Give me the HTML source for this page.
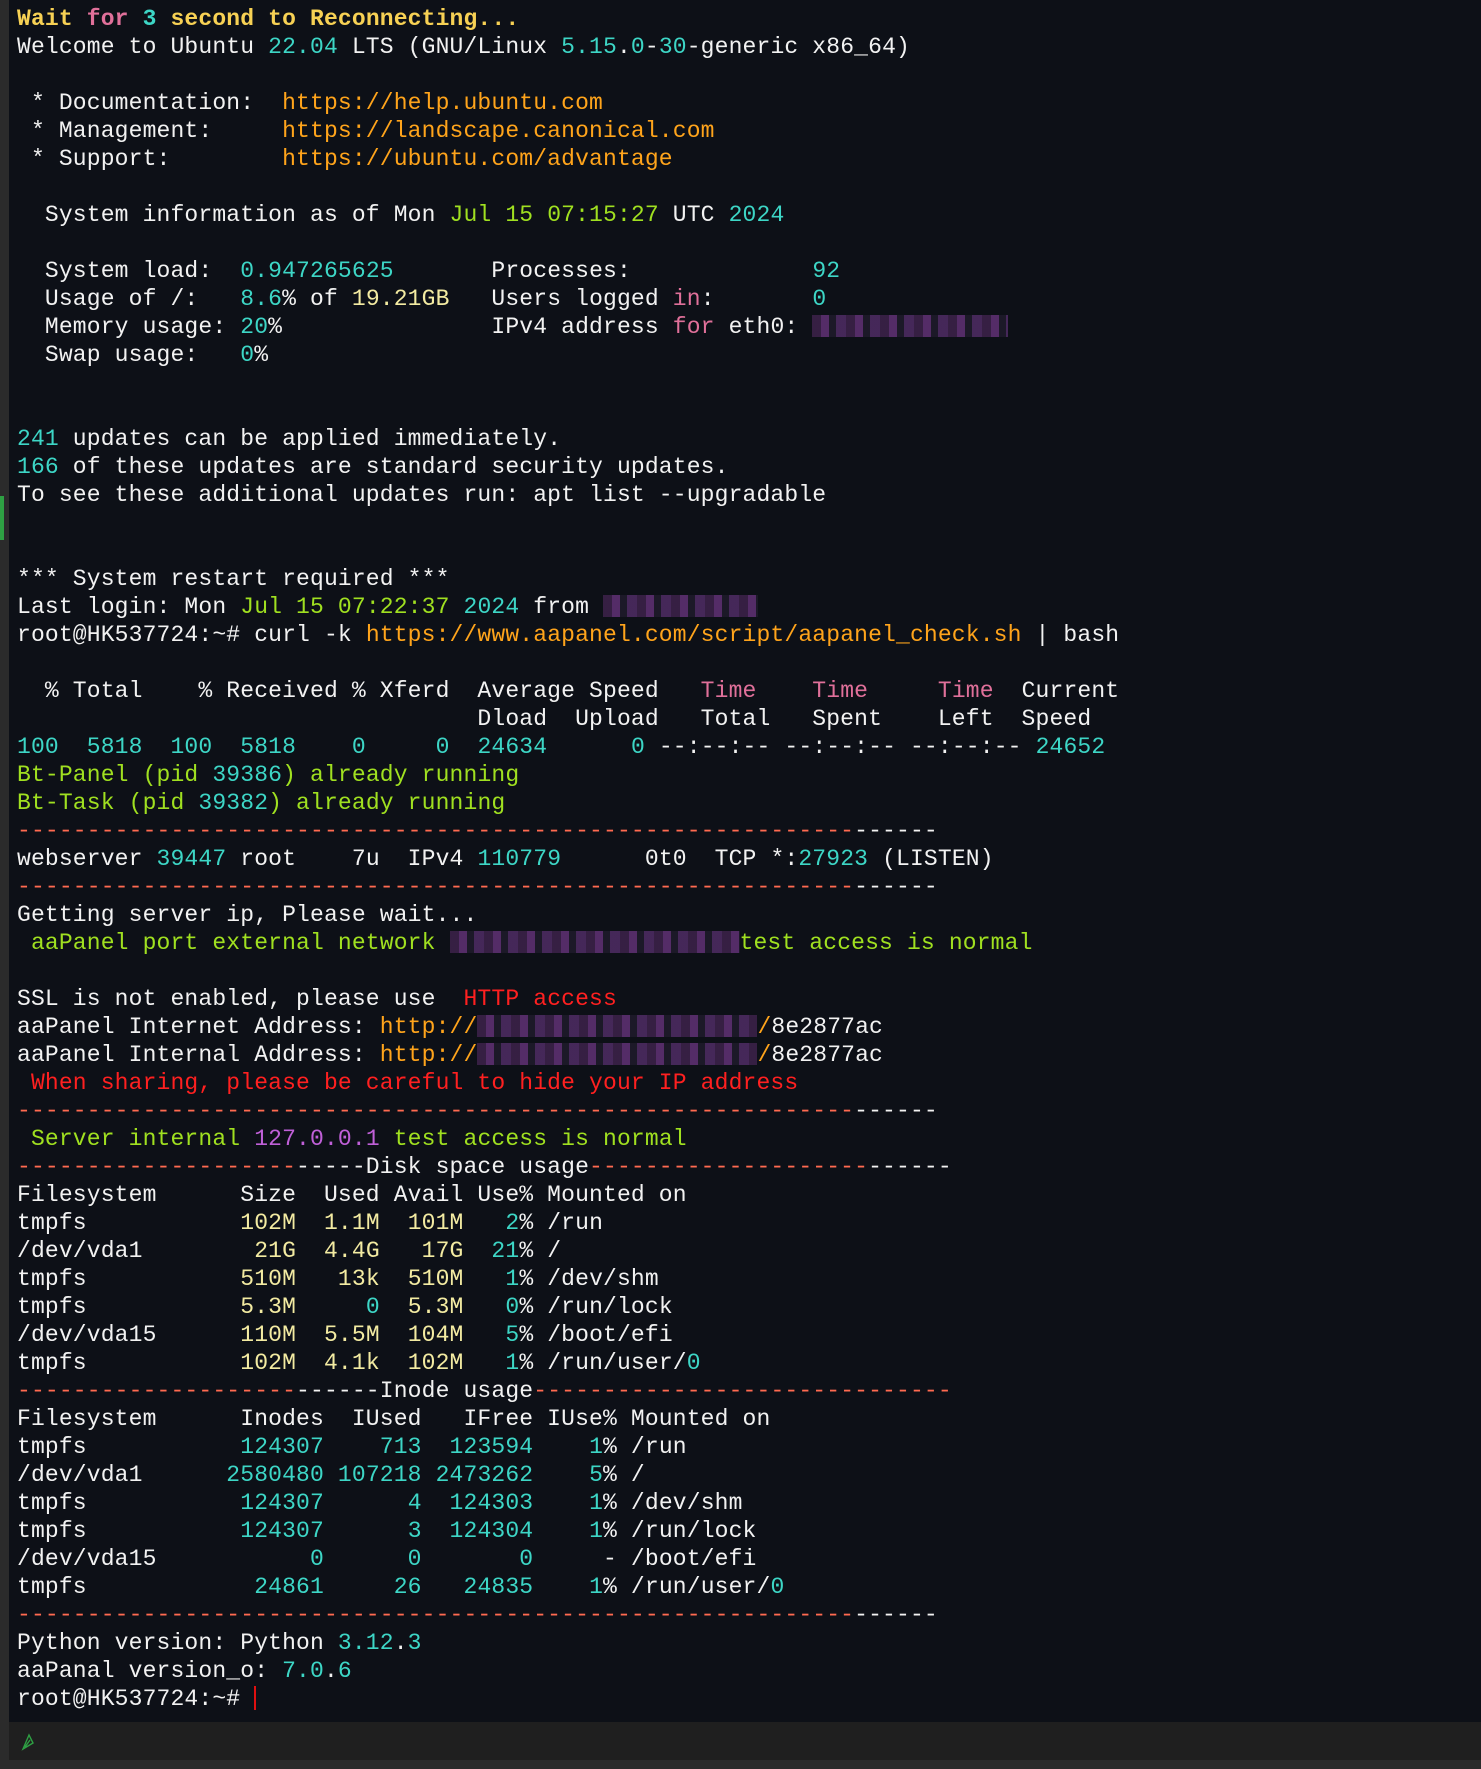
<!DOCTYPE html>
<html><head><meta charset="utf-8"><style>
html,body{margin:0;padding:0;}
body{width:1481px;height:1769px;background:#0d1017;position:relative;overflow:hidden;}
.lb{position:absolute;left:0;top:0;width:9px;height:1769px;background:#2b2b2b;}
.gm{position:absolute;left:0;top:496px;width:4px;height:44px;background:#2ea043;}
pre{position:absolute;left:17px;top:5px;margin:0;font-family:"Liberation Mono",monospace;font-size:23px;line-height:28px;color:#f2f2f2;letter-spacing:0.15px;}
.y{color:#f7d154;font-weight:bold}
.p{color:#e0709a}
.c{color:#3dd6c6}
.o{color:#ffa41b}
.g{color:#a0e020}
.r{color:#ff2020}
.v{color:#c060d8}
.ly{color:#f3eba2}
.d{color:#ff6a50}
.b{display:inline-block;height:22px;vertical-align:-4px;background:repeating-linear-gradient(90deg,#3a2148 0 9px,#5c2f70 9px 17px,#1e1a2a 17px 24px,#4b2a60 24px 34px);opacity:.9}
.bar{position:absolute;left:9px;top:1722px;width:1472px;height:38px;background:#1f1f1f;}
.bot{position:absolute;left:0;top:1760px;width:1481px;height:9px;background:#2b2b2b;}
</style></head><body>
<div class="lb"></div><div class="gm"></div>
<pre><span class="y">Wait </span><span class="p" style="font-weight:bold">for</span><span class="c" style="font-weight:bold"> 3</span><span class="y"> second to Reconnecting...</span>
Welcome to Ubuntu <span class="c">22.04</span> LTS (GNU/Linux <span class="c">5.15</span>.<span class="c">0</span>-<span class="c">30</span>-generic x86_64)

 * Documentation:  <span class="o">https://help.ubuntu.com</span>
 * Management:     <span class="o">https://landscape.canonical.com</span>
 * Support:        <span class="o">https://ubuntu.com/advantage</span>

  System information as of Mon <span class="g">Jul 15 07:15:27</span> UTC <span class="c">2024</span>

  System load:  <span class="c">0.947265625</span>       Processes:             <span class="c">92</span>
  Usage of /:   <span class="c">8.6</span>% of <span class="ly">19.21GB</span>   Users logged <span class="p">in</span>:       <span class="c">0</span>
  Memory usage: <span class="c">20</span>%               IPv4 address <span class="p">for</span> eth0: <span class="b" style="width:196px"></span>
  Swap usage:   <span class="c">0</span>%


<span class="c">241</span> updates can be applied immediately.
<span class="c">166</span> of these updates are standard security updates.
To see these additional updates run: apt list --upgradable


*** System restart required ***
Last login: Mon <span class="g">Jul 15 07:22:37</span> <span class="c">2024</span> from <span class="b" style="width:155px"></span>
root@HK537724:~# curl -k <span class="o">https://www.aapanel.com/script/aapanel_check.sh</span> | bash

  % Total    % Received % Xferd  Average Speed   <span class="p">Time</span>    <span class="p">Time</span>     <span class="p">Time</span>  Current
                                 Dload  Upload   Total   Spent    Left  Speed
<span class="c">100</span>  <span class="c">5818</span>  <span class="c">100</span>  <span class="c">5818</span>    <span class="c">0</span>     <span class="c">0</span>  <span class="c">24634</span>      <span class="c">0</span> --:--:-- --:--:-- --:--:-- <span class="c">24652</span>
<span class="g">Bt-Panel (pid <span class="c">39386</span>) already running</span>
<span class="g">Bt-Task (pid <span class="c">39382</span>) already running</span>
<span class="d">------------------------------------------------------------</span>------
webserver <span class="c">39447</span> root    7u  IPv4 <span class="c">110779</span>      0t0  TCP *:<span class="c">27923</span> (LISTEN)
<span class="d">------------------------------------------------------------</span>------
Getting server ip, Please wait...
<span class="g"> aaPanel port external network <span class="b" style="width:290px"></span>test access is normal</span>

SSL is not enabled, please use  <span class="r">HTTP access</span>
aaPanel Internet Address: <span class="o">http://</span><span class="b" style="width:280px"></span><span class="o">/</span>8e2877ac
aaPanel Internal Address: <span class="o">http://</span><span class="b" style="width:280px"></span><span class="o">/</span>8e2877ac
<span class="r"> When sharing, please be careful to hide your IP address</span>
<span class="d">------------------------------------------------------------</span>------
<span class="g"> Server internal <span class="v">127.0.0.1</span> test access is normal</span>
<span class="d">--------------------</span>-----Disk space usage<span class="d">--------------------</span>------
Filesystem      Size  Used Avail Use% Mounted on
tmpfs           <span class="ly">102M</span>  <span class="ly">1.1M</span>  <span class="ly">101M</span>   <span class="c">2</span>% /run
/dev/vda1        <span class="ly">21G</span>  <span class="ly">4.4G</span>   <span class="ly">17G</span>  <span class="c">21</span>% /
tmpfs           <span class="ly">510M</span>   <span class="ly">13k</span>  <span class="ly">510M</span>   <span class="c">1</span>% /dev/shm
tmpfs           <span class="ly">5.3M</span>     <span class="c">0</span>  <span class="ly">5.3M</span>   <span class="c">0</span>% /run/lock
/dev/vda15      <span class="ly">110M</span>  <span class="ly">5.5M</span>  <span class="ly">104M</span>   <span class="c">5</span>% /boot/efi
tmpfs           <span class="ly">102M</span>  <span class="ly">4.1k</span>  <span class="ly">102M</span>   <span class="c">1</span>% /run/user/<span class="c">0</span>
<span class="d">--------------------</span>------Inode usage<span class="d">------------------------------</span>
Filesystem      Inodes  IUsed   IFree IUse% Mounted on
tmpfs           <span class="c">124307</span>    <span class="c">713</span>  <span class="c">123594</span>    <span class="c">1</span>% /run
/dev/vda1      <span class="c">2580480</span> <span class="c">107218</span> <span class="c">2473262</span>    <span class="c">5</span>% /
tmpfs           <span class="c">124307</span>      <span class="c">4</span>  <span class="c">124303</span>    <span class="c">1</span>% /dev/shm
tmpfs           <span class="c">124307</span>      <span class="c">3</span>  <span class="c">124304</span>    <span class="c">1</span>% /run/lock
/dev/vda15           <span class="c">0</span>      <span class="c">0</span>       <span class="c">0</span>     - /boot/efi
tmpfs            <span class="c">24861</span>     <span class="c">26</span>   <span class="c">24835</span>    <span class="c">1</span>% /run/user/<span class="c">0</span>
<span class="d">------------------------------------------------------------</span>------
Python version: Python <span class="c">3.12</span>.<span class="c">3</span>
aaPanal version_o: <span class="c">7.0</span>.<span class="c">6</span>
root@HK537724:~# <span style="display:inline-block;width:2px;height:24px;background:#e01010;vertical-align:-5px"></span></pre>
<div class="bar"><svg style="position:absolute;left:10px;top:9px" width="20" height="20" viewBox="0 0 20 20"><path d="M4 18 L10 4 L14 12 Z M6 16 L11 9 M4 18 L14 12" fill="none" stroke="#2ea043" stroke-width="1.4"/></svg></div>
<div class="bot"></div>
</body></html>
